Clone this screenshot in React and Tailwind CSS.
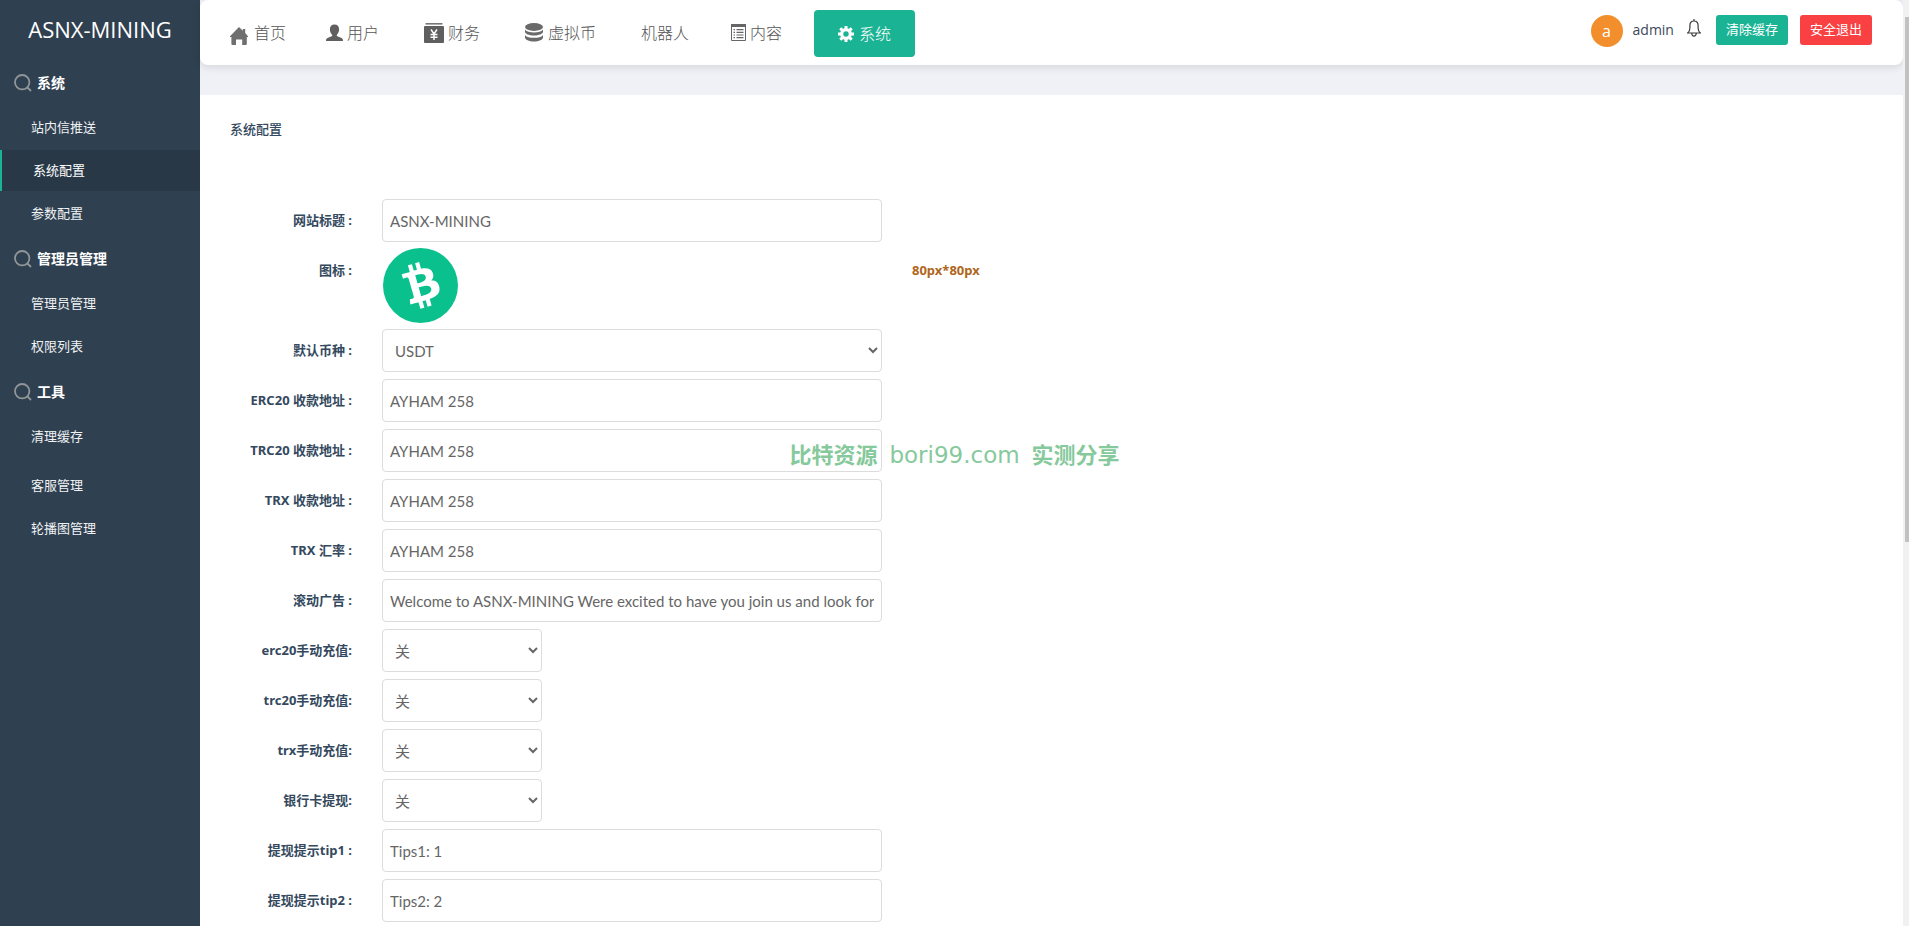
import { useId } from "react";

function HomeIcon() {
  return (
    <svg className="mt-1 size-5" viewBox="0 0 20 20" fill="#6f6f6f" aria-hidden="true">
      <path d="M0 11.200 9 2l3.800 3.700V4h2.400v4.100l2.800 3.100v.9h-1.200V19a1 1 0 0 1-1 1h-3.600v-5.600H6V20H2.400a1 1 0 0 1-1-1v-6.900H0z" />
    </svg>
  );
}

function UserIcon() {
  return (
    <svg className="h-[18px] w-[17px]" viewBox="0 0 17 18" fill="#606060" aria-hidden="true">
      <path d="M8.500.5c2.900 0 4.600 1.800 4.600 4.800 0 2.500-1 4.500-2.300 5.600v1.200l4.700 2c1 .4 1.500 1.200 1.500 2.900H0c0-1.700.5-2.500 1.500-2.900l4.700-2v-1.200C4.900 9.800 3.900 7.800 3.900 5.300 3.900 2.300 5.600.5 8.500.5z" />
    </svg>
  );
}

function MoneyIcon() {
  return (
    <svg className="h-5 w-5" viewBox="0 0 20 20" aria-hidden="true">
      <path fill="#777" d="M1.500 0h17v1.600h-17z" />
      <path fill="#5f5f5f" d="M1 3h18a1 1 0 0 1 1 1v15a1 1 0 0 1-1 1H1a1 1 0 0 1-1-1V4a1 1 0 0 1 1-1z" />
      <path d="m7 6.500 3 4.500 3-4.500M10 11v6M6.500 11.500h7M6.500 14.200h7" fill="none" stroke="#fff" strokeWidth="1.500" />
    </svg>
  );
}

function CoinsIcon() {
  return (
    <svg className="mr-px h-[19px] w-[18px]" viewBox="0 0 18 19" fill="#6a6a6a" aria-hidden="true">
      <ellipse cx="9" cy="4" rx="9" ry="3.900" />
      <path d="M0 6.500c1.500 2.200 5 2.900 9 2.900s7.500-.7 9-2.900v2.300c0 2.100-4 3.700-9 3.700S0 10.900 0 8.800z" />
      <path d="M0 11.900c1.500 2.200 5 2.900 9 2.900s7.500-.7 9-2.900v2.700c0 2.300-4 4-9 4s-9-1.700-9-4z" />
    </svg>
  );
}

function ListIcon() {
  return (
    <svg className="ml-0.5 h-[17px] w-[15px]" viewBox="0 0 15 17" aria-hidden="true">
      <path d="M.5.500h14v16H.5z" fill="none" stroke="#666" />
      <path d="M0 0h15v3H0zM2.500 5h1.500v1.200H2.500zM2.500 7.700h1.500v1.200H2.500zM2.500 10.400h1.500v1.200H2.500zM2.500 13h1.500v1.200H2.500zM5.500 5H12.500v1.200H5.500zM5.500 7.700H12.500v1.200H5.500zM5.500 10.400H12.500v1.200H5.500zM5.500 13H12.500v1.200H5.500z" fill="#666" />
    </svg>
  );
}

function GearIcon() {
  return (
    <svg className="size-4" viewBox="0 0 16 16" aria-hidden="true">
      <circle cx="8" cy="8" r="4.300" fill="none" stroke="#fff" strokeWidth="3.200" />
      <path d="M8 0v3M8 13v3M0 8h3M13 8h3M2.300 2.300l2.100 2.100M11.600 11.600l2.100 2.100M13.700 2.300l-2.100 2.100M4.400 11.600l-2.100 2.100" stroke="#fff" strokeWidth="3" />
    </svg>
  );
}

function BellIcon() {
  return (
    <svg className="mb-1 h-[18px] w-[14px]" viewBox="0 0 14 18" fill="none" stroke="#3c3c3c" strokeWidth="1.200" aria-hidden="true">
      <path d="M7 0v2M.6 14h12.800c-1.700-1.300-2.300-2.700-2.300-5V6.500C11.100 3.700 9.500 2 7 2S2.900 3.700 2.900 6.500V9c0 2.300-.6 3.700-2.300 5zM4.700 14.300c.2 1.900 1.100 2.900 2.300 2.900s2.100-1 2.300-2.900" />
    </svg>
  );
}

function SearchIcon() {
  return (
    <svg className="size-[18px]" viewBox="0 0 18 18" fill="none" stroke="#929699" strokeWidth="1.800" aria-hidden="true">
      <circle cx="8.200" cy="8.200" r="7.200" />
      <path d="m13 13 4 4" />
    </svg>
  );
}

function CoinLogo() {
  return (
    <svg className="size-[75px]" viewBox="0 0 32 32" role="img" aria-label="图标">
      <circle cx="16" cy="16" r="16" fill="#0ac18e" />
      <path
        fill="#fff"
        d="M21.207 10.534c-.776-1.972-2.722-2.150-4.988-1.710l-.807-2.813-1.712.491.786 2.740c-.450.128-.908.270-1.363.410l-.790-2.758-1.711.490.805 2.813c-.368.114-.730.226-1.085.328l-.003-.010-2.362.677.525 1.830s1.258-.388 1.243-.358c.694-.199 1.035.139 1.200.468l.920 3.204c.047-.013.110-.029.184-.040l-.181.052 1.287 4.490c.032.227.004.612-.480.752.027.013-1.246.356-1.246.356l.247 2.143 2.228-.640c.415-.117.825-.227 1.226-.340l.817 2.845 1.710-.490-.807-2.815a65.740 65.740 0 001.372-.380l.802 2.803 1.713-.491-.814-2.840c2.831-.991 4.638-2.294 4.113-5.070-.422-2.234-1.724-2.912-3.471-2.836.848-.790 1.213-1.858.642-3.300zm-.650 6.770c.610 2.127-3.100 2.929-4.260 3.263l-1.081-3.770c1.160-.333 4.704-1.710 5.340.508zm-2.322-5.090c.554 1.935-2.547 2.580-3.514 2.857l-.980-3.419c.966-.277 3.915-1.455 4.494.563z"
      />
    </svg>
  );
}

const navItems = [
  { label: "首页", icon: HomeIcon },
  { label: "用户", icon: UserIcon },
  { label: "财务", icon: MoneyIcon, indent: true },
  { label: "虚拟币", icon: CoinsIcon, indent: true },
  { label: "机器人", indent: true },
  { label: "内容", icon: ListIcon },
];

const groups = [
  { title: "系统", items: ["站内信推送", "系统配置", "参数配置"] },
  { title: "管理员管理", items: ["管理员管理", "权限列表"] },
  { title: "工具", items: ["清理缓存"] },
];

function SideItem({ label, active }) {
  return (
    <li className="mb-0.5">
      <a
        href="#"
        aria-current={active ? "page" : undefined}
        className={
          active
            ? "flex h-[41px] items-center border-l-2 border-[#1ab394] bg-[#293846] pl-[31px] text-[13px] text-white"
            : "flex h-[41px] items-center pl-[31px] text-[13px] text-[#f0f2f4]"
        }
      >
        {label}
      </a>
    </li>
  );
}

function Sidebar() {
  return (
    <aside className="w-[200px] shrink-0 bg-[#2f4050]">
      <h1 className="flex h-[60px] items-center justify-center pb-0.5 text-[22px] text-white">ASNX-MINING</h1>
      <nav>
        {groups.map((group) => (
          <section key={group.title}>
            <h2 className="flex h-[47px] items-center gap-[5px] pb-px pl-3.5 text-sm font-bold text-white">
              <SearchIcon />
              {group.title}
            </h2>
            <ul>
              {group.items.map((item) => (
                <SideItem key={item} label={item} active={item === "系统配置"} />
              ))}
            </ul>
          </section>
        ))}
        <ul className="mt-2">
          <SideItem label="客服管理" />
          <SideItem label="轮播图管理" />
        </ul>
      </nav>
    </aside>
  );
}

function Header() {
  return (
    <header className="flex h-[65px] shrink-0 justify-between rounded-lg bg-white pr-[31px] pl-2.5 shadow-[0_2px_8px_rgba(0,0,0,0.12)]">
      <nav className="flex items-center text-base font-light text-[#555]">
        {navItems.map(({ label, icon: Icon, indent }) => (
          <a
            key={label}
            href="#"
            className={indent ? "flex items-center gap-1 pr-5 pl-[25px]" : "flex items-center gap-1 px-5"}
          >
            {Icon && <Icon />}
            {label}
          </a>
        ))}
        <a href="#" className="mt-0.5 ml-3 flex h-[47px] items-center gap-[5px] rounded bg-[#1ab394] px-6 text-white">
          <GearIcon />
          系统
        </a>
      </nav>
      <div className="flex h-[60px] items-center">
        <span className="mt-0.5 flex size-8 items-center justify-center rounded-full bg-[#f28f2c] text-base text-white">a</span>
        <span className="ml-2.5 text-sm text-[#3c4858]">admin</span>
        <button type="button" aria-label="通知" className="ml-[13px]">
          <BellIcon />
        </button>
        <button type="button" className="ml-[15px] h-[30px] rounded-[3px] bg-[#1ab394] px-2.5 text-[13px] text-white">
          清除缓存
        </button>
        <button type="button" className="ml-3 h-[30px] rounded-[3px] bg-[#f94144] px-2.5 text-[13px] text-white">
          安全退出
        </button>
      </div>
    </header>
  );
}

const controlStyle =
  "h-[43px] rounded border border-[#dcdcdc] bg-white font-[Lato,'Noto_Sans_CJK_SC',sans-serif] text-[15px] text-[#666] outline-none";

function Row({ label, id, children }) {
  return (
    <div className="flex items-start">
      <label
        htmlFor={id}
        className="w-[122px] shrink-0 text-right font-['Noto_Sans','Noto_Sans_CJK_SC',sans-serif] text-[13px] leading-[43px] font-bold text-[#34495e]"
      >
        {label}
      </label>
      <div className="ml-[30px] flex">{children}</div>
    </div>
  );
}

function TextRow({ label, value }) {
  const id = useId();
  return (
    <Row label={label} id={id}>
      <input id={id} type="text" defaultValue={value} className={`${controlStyle} w-[500px] px-[7px]`} />
    </Row>
  );
}

function SelectRow({ label, options, wide }) {
  const id = useId();
  return (
    <Row label={label} id={id}>
      <select id={id} className={`${controlStyle} ${wide ? "w-[500px]" : "w-40"} px-2`}>
        {options.map((option) => (
          <option key={option}>{option}</option>
        ))}
      </select>
    </Row>
  );
}

export default function App() {
  return (
    <div className="relative flex h-screen overflow-hidden bg-[#f0f1f6] font-['Open_Sans','Noto_Sans_CJK_SC',sans-serif]">
      <Sidebar />
      <div className="flex min-w-0 flex-1 flex-col">
        <Header />
        <main className="mt-[30px] flex-1 overflow-hidden bg-white pl-[30px]">
          <h2 className="pt-6 text-[13px] leading-5 font-medium text-[#34495e]">系统配置</h2>
          <form className="mt-[60px] flex flex-col gap-[7px]">
            <TextRow label="网站标题 :" value="ASNX-MINING" />
            <Row label="图标 :">
              <div className="flex h-[73px] w-[500px] items-center pl-px">
                <CoinLogo />
              </div>
              <span className="ml-[30px] font-['Noto_Sans',sans-serif] text-[13px] leading-[43px] font-bold text-[#b0661c]">
                80px*80px
              </span>
            </Row>
            <SelectRow label="默认币种 :" options={["USDT"]} wide />
            <TextRow label="ERC20 收款地址 :" value="AYHAM 258" />
            <TextRow label="TRC20 收款地址 :" value="AYHAM 258" />
            <TextRow label="TRX 收款地址 :" value="AYHAM 258" />
            <TextRow label="TRX 汇率 :" value="AYHAM 258" />
            <TextRow
              label="滚动广告 :"
              value="Welcome to ASNX-MINING Were excited to have you join us and look forward to working with you"
            />
            <SelectRow label="erc20手动充值:" options={["关", "开"]} />
            <SelectRow label="trc20手动充值:" options={["关", "开"]} />
            <SelectRow label="trx手动充值:" options={["关", "开"]} />
            <SelectRow label="银行卡提现:" options={["关", "开"]} />
            <TextRow label="提现提示tip1 :" value="Tips1: 1" />
            <TextRow label="提现提示tip2 :" value="Tips2: 2" />
          </form>
        </main>
      </div>
      <div className="w-1.5 shrink-0 bg-[#f1f1f1] pt-[17px] pl-0.5" aria-hidden="true">
        <div className="h-[525px] bg-[#c1c1c1]" />
      </div>
      <div className="pointer-events-none absolute inset-x-0 top-[438px] flex items-baseline justify-center gap-3 text-[22px] leading-8 font-bold text-[#86c99c]">
        <span>比特资源</span>
        <span className="font-['DejaVu_Sans',sans-serif] text-[23px] font-normal">bori99.com</span>
        <span>实测分享</span>
      </div>
    </div>
  );
}
